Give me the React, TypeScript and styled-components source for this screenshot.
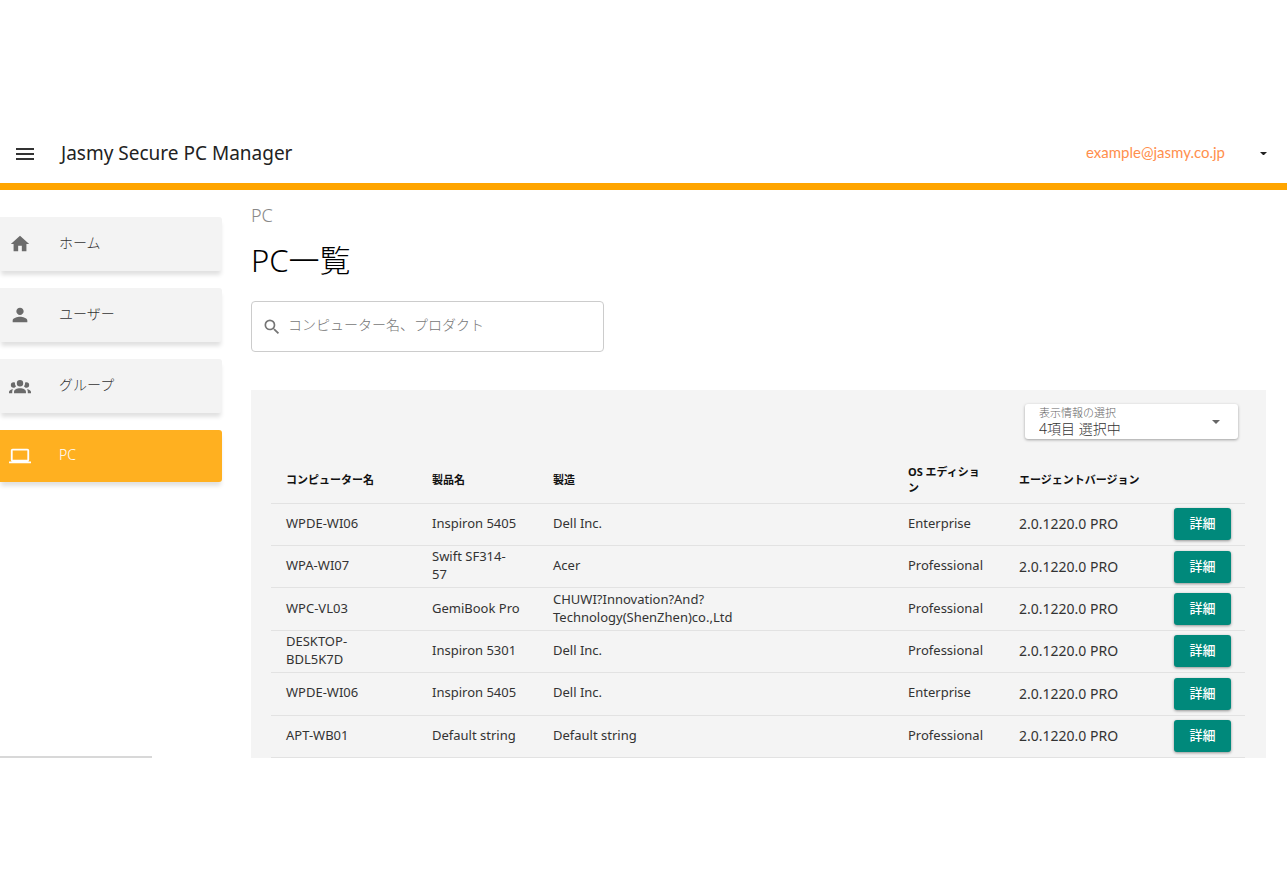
import React from "react";
import styled, { createGlobalStyle } from "styled-components";
import { MdHome, MdPerson, MdMenu, MdSearch } from "react-icons/md";

const GlobalStyle = createGlobalStyle`
  * { box-sizing: border-box; }
  body {
    margin: 0;
    background: #fff;
    color: #222;
    font-family: "Noto Sans", "Noto Sans CJK JP", sans-serif;
    font-size: 13px;
  }
  button, input, select { font-family: inherit; }
`;

const Page = styled.div`
  padding: 124px 0;
`;

const Header = styled.header`
  display: flex;
  align-items: center;
  height: 66px;
  padding: 0 20px 0 13px;
  border-bottom: 7px solid #ffa500;
`;

const MenuButton = styled.button`
  display: flex;
  padding: 0;
  border: 0;
  background: none;
  color: #333;
  cursor: pointer;
`;

const AppTitle = styled.div`
  margin-left: 24px;
  padding-bottom: 2px;
  font-size: 19px;
  line-height: 24px;
`;

const Account = styled.button`
  display: flex;
  align-items: center;
  gap: 35px;
  margin-left: auto;
  padding: 0;
  border: 0;
  background: none;
  color: #ff8f4d;
  font-family: Lato, sans-serif;
  font-size: 15px;
  line-height: 20px;
  cursor: pointer;
`;

const AccountName = styled.span`
  padding-bottom: 4px;
`;

const Caret = styled.svg<{ $color: string; $size: number }>`
  flex: none;
  width: ${(p) => p.$size}px;
  height: ${(p) => p.$size / 2}px;
  fill: ${(p) => p.$color};
`;

const Body = styled.div`
  display: flex;
  align-items: stretch;
`;

const Sidebar = styled.aside`
  display: flex;
  flex-direction: column;
  flex: none;
  width: 222px;
  padding-top: 27px;
`;

const NavList = styled.nav`
  display: flex;
  flex-direction: column;
  gap: 17px;
`;

const NavItem = styled.a<{ $active?: boolean }>`
  display: flex;
  align-items: center;
  gap: 28px;
  height: ${(p) => (p.$active ? 52 : 54)}px;
  padding-left: 9px;
  border-radius: 0 3px 3px 0;
  background: ${(p) => (p.$active ? "#ffb020" : "#f3f3f3")};
  color: ${(p) => (p.$active ? "#fff" : "#333")};
  box-shadow: 0 5px 4px -1px rgba(0, 0, 0, 0.12);
  font-size: 14px;
  font-weight: 300;
  line-height: 20px;
  text-decoration: none;

  svg {
    flex: none;
    width: 22px;
    height: 22px;
    fill: ${(p) => (p.$active ? "#fff" : "#6b6b6b")};
  }
`;

const NavLabel = styled.span`
  padding-bottom: 3px;
`;

const SidebarEnd = styled.div`
  width: 152px;
  margin-top: auto;
  border-bottom: 2px solid #d8d8d8;
`;

const Main = styled.main`
  flex: 1;
  min-width: 0;
  padding: 13px 21px 0 29px;
`;

const Breadcrumb = styled.div`
  color: #888;
  font-size: 18px;
  line-height: 24px;
  font-weight: 300;
`;

const Heading = styled.h1`
  margin: 13px 0 21px;
  color: #000;
  font-size: 31px;
  line-height: 40px;
  font-weight: 300;
`;

const SearchBox = styled.label`
  display: flex;
  align-items: center;
  gap: 6px;
  width: 353px;
  height: 51px;
  padding: 0 10px;
  border: 1px solid #ccc;
  border-radius: 4px;
  color: #757575;
`;

const SearchInput = styled.input`
  flex: 1;
  min-width: 0;
  padding: 0 0 3px;
  border: 0;
  outline: 0;
  background: none;
  font-size: 14px;
  font-weight: 300;
  line-height: 20px;

  &::placeholder { color: #777; opacity: 1; }
`;

const Panel = styled.section`
  margin-top: 38px;
  padding: 14px 21px 0 20px;
  background: #f4f4f4;
`;

const PanelBar = styled.div`
  display: flex;
  justify-content: flex-end;
  padding-right: 7px;
`;

const ColumnPicker = styled.div`
  display: grid;
  grid-template-columns: 1fr auto;
  align-items: center;
  width: 213px;
  height: 35px;
  padding: 0 18px 0 14px;
  border-radius: 3px;
  background: #fff;
  box-shadow: 0 1px 3px rgba(0, 0, 0, 0.35);
`;

const PickerText = styled.div`
  display: flex;
  flex-direction: column;
`;

const PickerLabel = styled.label`
  color: #666;
  font-size: 11px;
  font-weight: 300;
  line-height: 14px;
`;

const PickerSelect = styled.select`
  appearance: none;
  height: 18px;
  padding: 0;
  border: 0;
  background: none;
  color: #333;
  font-size: 14px;
  font-weight: 300;
  line-height: 18px;
`;

const Table = styled.table`
  width: 100%;
  height: 303px;
  margin-top: 16px;
  border-collapse: collapse;
  table-layout: fixed;
`;

const Col = styled.col<{ $width?: number }>`
  width: ${(p) => (p.$width ? `${p.$width}px` : "auto")};
`;

const HeadCell = styled.th`
  height: 48px;
  padding: 2px 16px 0 15px;
  border-bottom: 1px solid #e2e2e2;
  color: #111;
  font-size: 11px;
  font-weight: 700;
  line-height: 16px;
  text-align: left;
`;

const Row = styled.tr`
  height: 42px;
`;

const Cell = styled.td`
  padding: 0 16px 0 15px;
  border-bottom: 1px solid #e2e2e2;
  color: #333;
  font-size: 13px;
  line-height: 18px;
  white-space: pre-line;
`;

const TextCell = styled(Cell)`
  padding-bottom: 3px;
`;

const VersionCell = styled(Cell)`
  font-size: 14px;
`;

const DetailButton = styled.button`
  display: block;
  width: 57px;
  height: 32px;
  padding: 0 0 2px;
  border: 0;
  border-radius: 3px;
  background: #00897b;
  color: #fff;
  box-shadow: 0 1px 3px rgba(0, 0, 0, 0.4);
  font-size: 13px;
  font-weight: 500;
  line-height: 20px;
  cursor: pointer;
`;

const GroupIcon = () => (
  <svg viewBox="0 0 24 24" aria-hidden="true">
    <path d="M12,5.5A3.5,3.5 0 0,1 15.5,9A3.5,3.5 0 0,1 12,12.5A3.5,3.5 0 0,1 8.5,9A3.5,3.5 0 0,1 12,5.5M5,8C5.56,8 6.08,8.15 6.53,8.42C6.38,9.85 6.8,11.27 7.66,12.38C7.16,13.34 6.16,14 5,14A3,3 0 0,1 2,11A3,3 0 0,1 5,8M19,8A3,3 0 0,1 22,11A3,3 0 0,1 19,14C17.84,14 16.84,13.34 16.34,12.38C17.2,11.27 17.62,9.85 17.47,8.42C17.92,8.15 18.44,8 19,8M5.5,18.25C5.5,16.18 8.41,14.5 12,14.5C15.59,14.5 18.5,16.18 18.5,18.25V20H5.5V18.25M0,20V18.5C0,17.11 1.89,15.94 4.45,15.6C3.86,16.28 3.5,17.22 3.5,18.25V20H0M24,20H20.5V18.25C20.5,17.22 20.14,16.28 19.55,15.6C22.11,15.94 24,17.11 24,18.5V20Z" />
  </svg>
);

const LaptopIcon = () => (
  <svg viewBox="0 0 24 24" aria-hidden="true">
    <path d="M4,6H20V16H4M20,18A2,2 0 0,0 22,16V6C22,4.89 21.1,4 20,4H4C2.89,4 2,4.89 2,6V16A2,2 0 0,0 4,18H0V20H24V18H20Z" />
  </svg>
);

const DownCaret = ({ color, size }: { color: string; size: number }) => (
  <Caret $color={color} $size={size} viewBox="0 0 10 5" aria-hidden="true">
    <path d="M0 0h10L5 5z" />
  </Caret>
);

const navItems = [
  { label: "ホーム", icon: <MdHome /> },
  { label: "ユーザー", icon: <MdPerson /> },
  { label: "グループ", icon: <GroupIcon /> },
  { label: "PC", icon: <LaptopIcon />, active: true },
];

const pcs = [
  { name: "WPDE-WI06", product: "Inspiron 5405", maker: "Dell Inc.", os: "Enterprise", version: "2.0.1220.0 PRO" },
  { name: "WPA-WI07", product: "Swift SF314-\n57", maker: "Acer", os: "Professional", version: "2.0.1220.0 PRO" },
  {
    name: "WPC-VL03",
    product: "GemiBook Pro",
    maker: "CHUWI?Innovation?And?\nTechnology(ShenZhen)co.,Ltd",
    os: "Professional",
    version: "2.0.1220.0 PRO",
  },
  { name: "DESKTOP-\nBDL5K7D", product: "Inspiron 5301", maker: "Dell Inc.", os: "Professional", version: "2.0.1220.0 PRO" },
  { name: "WPDE-WI06", product: "Inspiron 5405", maker: "Dell Inc.", os: "Enterprise", version: "2.0.1220.0 PRO" },
  { name: "APT-WB01", product: "Default string", maker: "Default string", os: "Professional", version: "2.0.1220.0 PRO" },
];

export default function App() {
  return (
    <Page>
      <GlobalStyle />
      <Header>
        <MenuButton type="button" aria-label="メニュー">
          <MdMenu size={24} />
        </MenuButton>
        <AppTitle>Jasmy Secure PC Manager</AppTitle>
        <Account type="button">
          <AccountName>example@jasmy.co.jp</AccountName>
          <DownCaret color="#222" size={7} />
        </Account>
      </Header>
      <Body>
        <Sidebar>
          <NavList>
            {navItems.map((item) => (
              <NavItem key={item.label} href="#" $active={item.active}>
                {item.icon}
                <NavLabel>{item.label}</NavLabel>
              </NavItem>
            ))}
          </NavList>
          <SidebarEnd />
        </Sidebar>
        <Main>
          <Breadcrumb>PC</Breadcrumb>
          <Heading>PC一覧</Heading>
          <SearchBox>
            <MdSearch size={20} />
            <SearchInput
              type="text"
              aria-label="検索"
              placeholder="コンピューター名、プロダクト"
            />
          </SearchBox>
          <Panel>
            <PanelBar>
              <ColumnPicker>
                <PickerText>
                  <PickerLabel htmlFor="columns">表示情報の選択</PickerLabel>
                  <PickerSelect id="columns">
                    <option>4項目 選択中</option>
                  </PickerSelect>
                </PickerText>
                <DownCaret color="#666" size={8} />
              </ColumnPicker>
            </PanelBar>
            <Table>
              <colgroup>
                <Col $width={146} />
                <Col $width={121} />
                <Col />
                <Col $width={111} />
                <Col $width={155} />
                <Col $width={86} />
              </colgroup>
              <thead>
                <tr>
                  <HeadCell>コンピューター名</HeadCell>
                  <HeadCell>製品名</HeadCell>
                  <HeadCell>製造</HeadCell>
                  <HeadCell>OS エディション</HeadCell>
                  <HeadCell>エージェントバージョン</HeadCell>
                  <HeadCell aria-label="操作" />
                </tr>
              </thead>
              <tbody>
                {pcs.map((pc, index) => (
                  <Row key={index}>
                    <TextCell>{pc.name}</TextCell>
                    <TextCell>{pc.product}</TextCell>
                    <TextCell>{pc.maker}</TextCell>
                    <TextCell>{pc.os}</TextCell>
                    <VersionCell>{pc.version}</VersionCell>
                    <Cell>
                      <DetailButton type="button">詳細</DetailButton>
                    </Cell>
                  </Row>
                ))}
              </tbody>
            </Table>
          </Panel>
        </Main>
      </Body>
    </Page>
  );
}
